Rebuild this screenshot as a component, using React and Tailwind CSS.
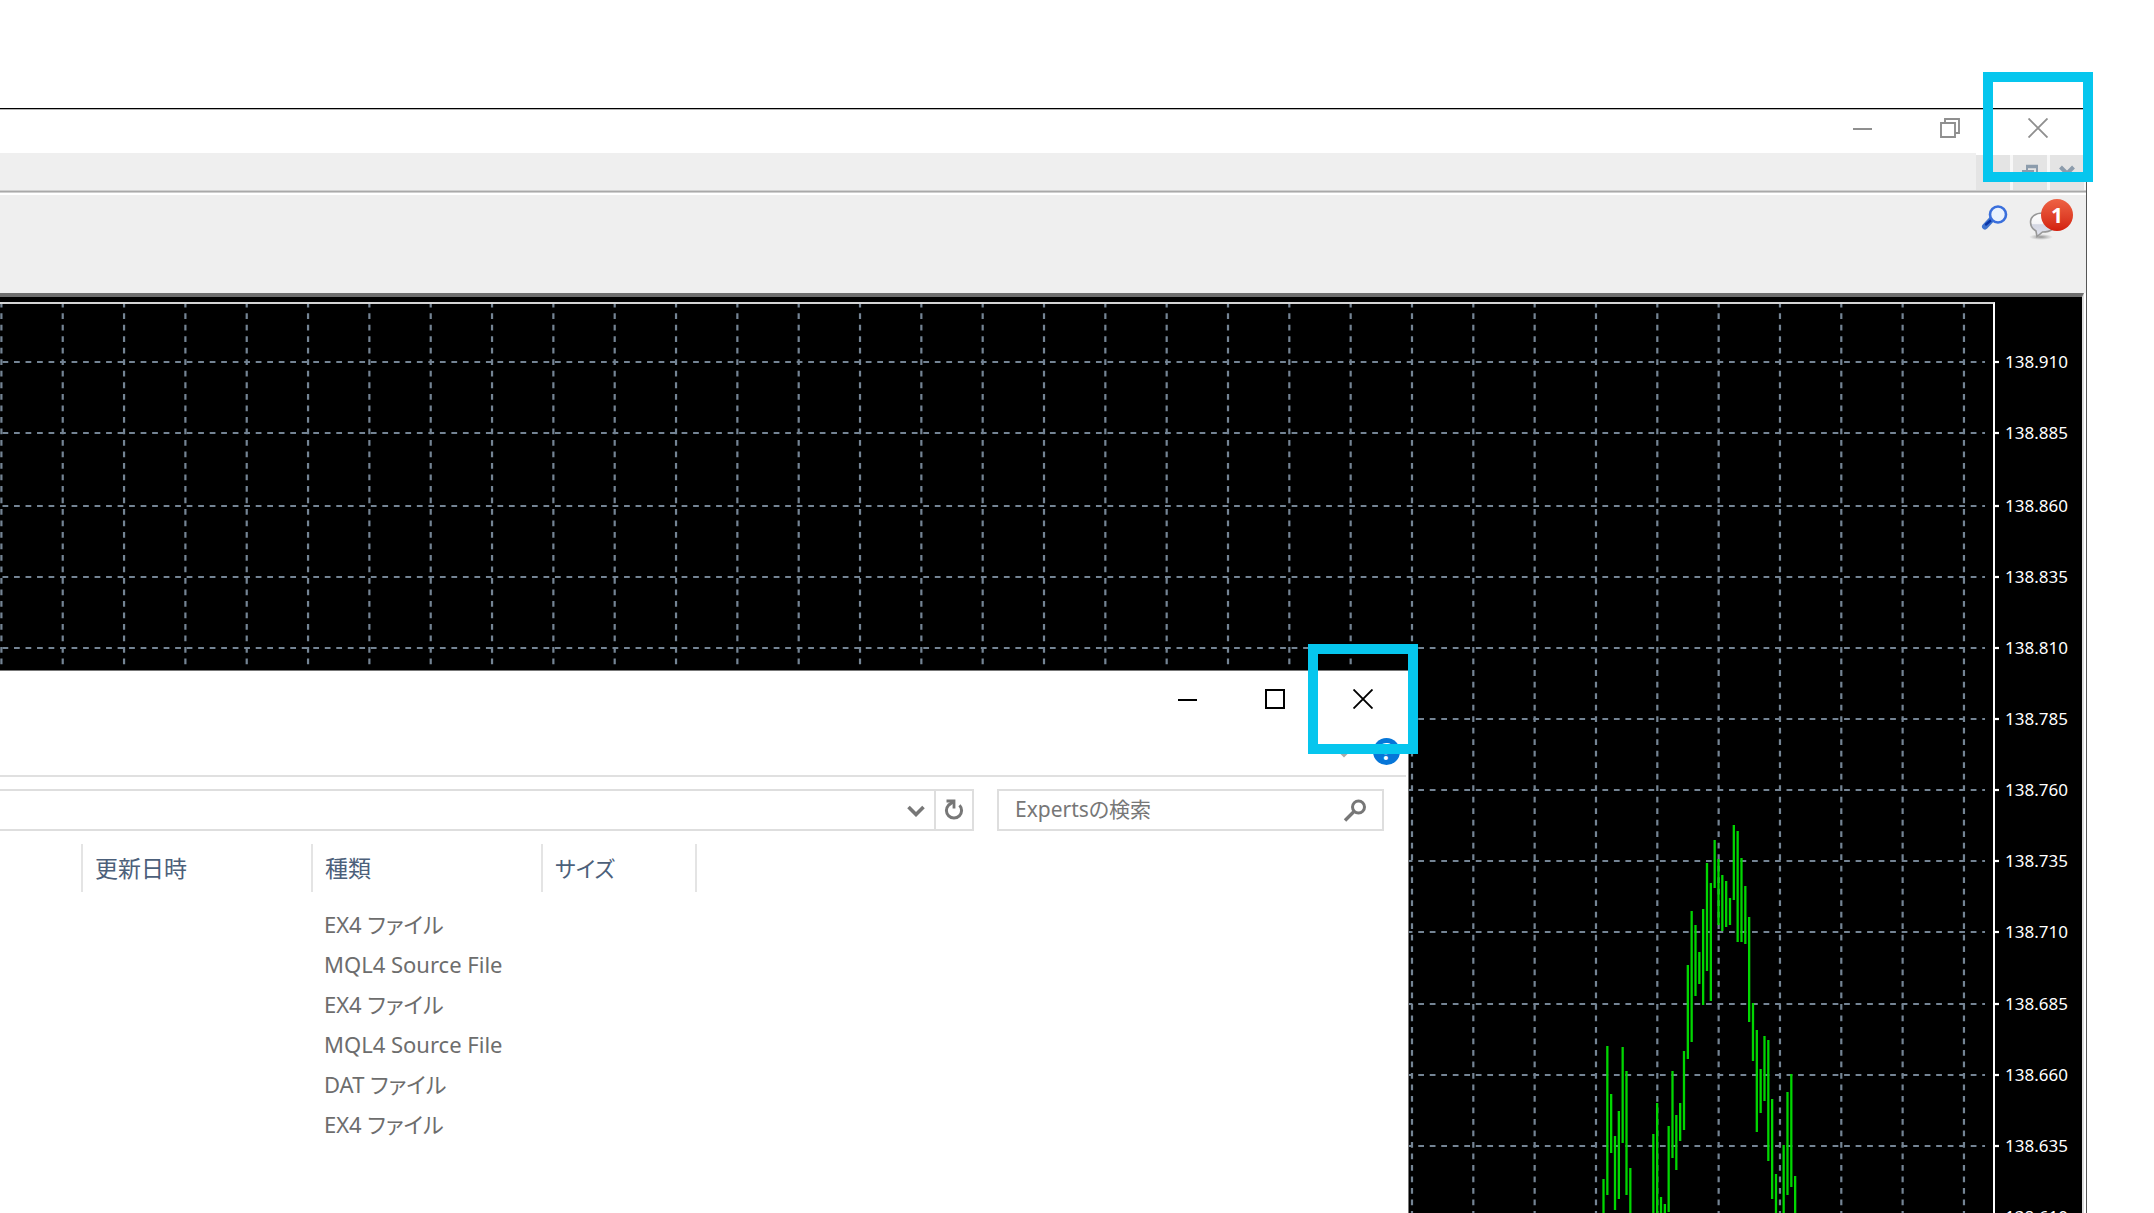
import React from "react";

const GRID_STEP = 61.33;
const GRID_X = Array.from({ length: 46 }, (_, i) => 1.4 + i * GRID_STEP);

const LEVELS = [
  ["138.910", 58],
  ["138.885", 129],
  ["138.860", 202],
  ["138.835", 273],
  ["138.810", 344],
  ["138.785", 415],
  ["138.760", 486],
  ["138.735", 557],
  ["138.710", 628],
  ["138.685", 700],
  ["138.660", 771],
  ["138.635", 842],
  ["138.610", 913],
];

// [slot, high, low]: slots are BAR_STEP apart, high and low are heights inside the plot
const BAR_STEP = 3.833;
const BARS = [
  [0, 875, 960], [1, 742, 891], [2, 790, 849], [3, 832, 906], [4, 807, 895],
  [5, 743, 839], [6, 767, 891], [7, 864, 960], [13, 830, 960], [14, 799, 960],
  [15, 893, 960], [16, 900, 960], [17, 822, 908], [18, 767, 854], [19, 811, 866],
  [20, 799, 837], [21, 747, 826], [22, 661, 755], [23, 607, 738], [24, 621, 692],
  [25, 648, 680], [26, 605, 701], [27, 559, 667], [28, 579, 697], [29, 536, 584],
  [30, 555, 621], [31, 571, 627], [32, 577, 623], [33, 594, 621], [34, 521, 596],
  [35, 527, 638], [36, 554, 638], [37, 582, 640], [38, 613, 718], [39, 699, 757],
  [40, 726, 828], [41, 765, 809], [42, 732, 797], [43, 736, 857], [44, 795, 895],
  [45, 870, 960], [47, 841, 960], [48, 788, 891], [49, 770, 883], [50, 872, 960],
];

const FILES = [
  "EX4 ファイル",
  "MQL4 Source File",
  "EX4 ファイル",
  "MQL4 Source File",
  "DAT ファイル",
  "EX4 ファイル",
];

function MinimizeIcon() {
  return (
    <svg width="20" height="20" viewBox="0 0 20 20" fill="none" stroke="currentColor" strokeWidth="2">
      <path d="M1 11H20" />
    </svg>
  );
}

function MaximizeIcon() {
  return (
    <svg width="20" height="20" viewBox="0 0 20 20" fill="none" stroke="currentColor" strokeWidth="2">
      <path d="M1 1H19V19H1Z" />
    </svg>
  );
}

function RestoreIcon() {
  return (
    <svg width="20" height="20" viewBox="0 0 20 20" fill="none" stroke="currentColor" strokeWidth="1.9">
      <path d="M1 5H15V19H1Z" />
      <path d="M5 5V1H19V15H15" />
    </svg>
  );
}

function CloseIcon() {
  return (
    <svg width="20" height="20" viewBox="0 0 20 20" fill="none" stroke="currentColor" strokeWidth="1.9">
      <path d="M0.5 0.5L19.5 19.5M19.5 0.5L0.5 19.5" />
    </svg>
  );
}

function CaptionButton({ label, children }) {
  return (
    <button type="button" aria-label={label} className="flex h-9 w-[88px] items-center justify-center">
      {children}
    </button>
  );
}

function ChildButton({ label, children }) {
  return (
    <button type="button" aria-label={label} className="flex h-[35px] w-[34px] items-center justify-center bg-[#e4e4e4] text-[#8c9cac]">
      {children}
    </button>
  );
}

function Plot() {
  return (
    <svg className="absolute inset-0 h-full w-full" fill="none" role="img" aria-label="Price chart">
      <g stroke="#748494" strokeWidth="2.2" strokeDasharray="5.755 5.755">
        {GRID_X.map((x) => (
          <line key={x} x1={x} x2={x} y1="-2.2" y2="960" />
        ))}
        {LEVELS.map(([price, y]) => (
          <line key={price} x1="2.5" x2="99.6%" y1={y} y2={y} />
        ))}
      </g>
      <g stroke="#00d600" strokeWidth="2.3">
        {BARS.map(([slot, high, low]) => {
          const x = 1603.5 + slot * BAR_STEP;
          return <line key={slot} x1={x} x2={x} y1={high} y2={low} />;
        })}
      </g>
    </svg>
  );
}

function PriceAxis() {
  return (
    <svg className="absolute inset-0 h-full w-full">
      {LEVELS.map(([price, y]) => (
        <g key={price}>
          <path d={`M0 ${y}h4`} stroke="#fff" strokeWidth="2.2" />
          <text x="10" y={y + 6} fill="#fff" className="text-[17px]">
            {price}
          </text>
        </g>
      ))}
    </svg>
  );
}

function Toolbar() {
  return (
    <div className="flex h-[100px] items-start justify-end border-t-2 border-white bg-[#efefef] pt-2 pr-[13px]">
      <button type="button" aria-label="Search" className="mr-[21px]">
        <svg width="28" height="30" viewBox="0 0 28 30" fill="none" strokeLinecap="round">
          <path d="M5 23.5L11.5 16.500" stroke="#3f74cf" strokeWidth="6" />
          <path d="M6 21.5L13 15.500" stroke="#0a35a8" strokeWidth="2.4" />
          <circle cx="18" cy="11.500" r="8" fill="#eaf2fd" stroke="#3a6fdc" strokeWidth="2.6" />
        </svg>
      </button>
      <button type="button" aria-label="Notifications" className="relative h-11 w-11">
        <svg className="absolute inset-0" width="44" height="44" viewBox="0 0 44 44">
          <defs>
            <linearGradient id="bubble" x1="0" y1="0" x2="0" y2="1">
              <stop offset="0" stopColor="#ffffff" />
              <stop offset="0.45" stopColor="#f4f4f6" />
              <stop offset="0.5" stopColor="#d3d6e2" />
              <stop offset="1" stopColor="#e2e4ee" />
            </linearGradient>
            <radialGradient id="shade">
              <stop offset="0" stopColor="#666" stopOpacity="0.7" />
              <stop offset="1" stopColor="#888" stopOpacity="0" />
            </radialGradient>
          </defs>
          <ellipse cx="12" cy="34" rx="12" ry="3" fill="url(#shade)" />
          <path
            d="M14 10C6 10 1.500 14 1.500 19C1.500 23 3.500 26 7 28L8 33.500L13.500 29C22 29 27 25 27 19C27 14 22 10 14 10Z"
            fill="url(#bubble)"
            stroke="#989898"
            strokeWidth="1.600"
          />
        </svg>
        <span className="absolute -top-1 left-3 flex size-8 items-center justify-center rounded-full bg-linear-to-b from-[#ee6244] to-[#d31d0b] text-[21px] leading-8 font-bold text-white">
          1
        </span>
      </button>
    </div>
  );
}

function ExplorerWindow() {
  return (
    <section className="absolute bottom-0 left-0 flex h-[543px] w-[1409px] flex-col border-t border-r border-[#777] bg-white text-[22px]">
      <header className="flex h-14 justify-end pt-[10px] pr-px text-black">
        <CaptionButton label="Minimize"><MinimizeIcon /></CaptionButton>
        <CaptionButton label="Maximize"><MaximizeIcon /></CaptionButton>
        <CaptionButton label="Close"><CloseIcon /></CaptionButton>
      </header>
      <div className="mr-[2px] flex h-[50px] items-center justify-end gap-5 border-b-2 border-[#e0e0e0] pt-px pr-[6px]">
        <button type="button" aria-label="Expand ribbon">
          <svg width="18" height="16" viewBox="0 0 18 16" fill="none" stroke="#aaa" strokeWidth="3">
            <path d="M4 6.500L9 11.500L14 6.500" />
          </svg>
        </button>
        <button type="button" aria-label="Help" className="size-[27px] rounded-full bg-[#0676d8] text-[23px] leading-[27px] font-bold text-white">
          ?
        </button>
      </div>
      <div className="flex pt-3">
        <div className="flex h-[42px] flex-1 border-2 border-l-0 border-[#dedede]">
          <input aria-label="Address" className="min-w-0 flex-1 outline-none" />
          <button type="button" aria-label="Recent locations" className="flex w-9 items-center justify-center">
            <svg width="18" height="14" viewBox="0 0 18 14" fill="none" stroke="#777" strokeWidth="3.600">
              <path d="M1.500 4L9 11.500L16.500 4" />
            </svg>
          </button>
          <button type="button" aria-label="Refresh" className="flex w-[38px] items-center justify-center border-l-2 border-[#dedede]">
            <svg width="20" height="22" viewBox="0 0 20 22" fill="none" stroke="#777" strokeWidth="3">
              <path d="M15.500 6.200A7.600 7.600 0 1 1 4.500 6.200L9.500 2.500" />
              <path d="M2.500 2H10V9.500" strokeWidth="2.800" />
            </svg>
          </button>
        </div>
        <label className="mr-6 ml-[23px] flex h-[42px] w-[387px] items-center border-2 border-[#dedede] pr-[15px] pl-4">
          <input
            aria-label="Expertsの検索"
            placeholder="Expertsの検索"
            className="min-w-0 flex-1 text-[21px] outline-none placeholder:text-[#777]"
          />
          <svg width="24" height="24" viewBox="0 0 24 24" fill="none" stroke="#777">
            <circle cx="15.500" cy="9" r="6" strokeWidth="3" />
            <path d="M11.500 13L2 22.500" strokeWidth="3.400" />
          </svg>
        </label>
      </div>
      <table className="mt-[13px] w-[696px] table-fixed text-left">
        <colgroup>
          <col className="w-[82px]" />
          <col className="w-[230px]" />
          <col className="w-[230px]" />
          <col className="w-[154px]" />
        </colgroup>
        <thead>
          <tr className="h-12 text-[23px] leading-8 text-[#4c607a]">
            <td />
            <th className="border-l-2 border-[#e4e4e4] p-0 pl-3 font-normal">更新日時</th>
            <th className="border-l-2 border-[#e4e4e4] p-0 pl-3 font-normal">種類</th>
            <th className="border-x-2 border-[#e4e4e4] p-0 pl-3 text-[22px] font-normal">サイズ</th>
          </tr>
        </thead>
        <tbody className="text-[#6d6d6d] before:block before:h-3">
          {FILES.map((type, i) => (
            <tr key={i} className="h-10">
              <td />
              <td />
              <td className="p-0 pl-3 whitespace-nowrap">{type}</td>
              <td />
            </tr>
          ))}
        </tbody>
      </table>
      <div className="absolute -top-[27px] right-[-10px] size-[110px] border-10 border-[#06c6ee]" />
    </section>
  );
}

export default function App() {
  return (
    <main className="relative flex h-screen flex-col overflow-hidden bg-white pt-[108px] font-['Noto_Sans','Noto_Sans_CJK_JP',sans-serif] [font-feature-settings:'palt']">
      <section className="mr-[67px] flex min-h-0 flex-1 flex-col border-t border-r border-t-black border-r-[#555]">
        <header className="flex h-11 justify-end border-t border-[#b5b5b5] pr-1 text-[#8f8f8f]">
          <CaptionButton label="Minimize"><MinimizeIcon /></CaptionButton>
          <CaptionButton label="Restore"><RestoreIcon /></CaptionButton>
          <CaptionButton label="Close"><CloseIcon /></CaptionButton>
        </header>
        <div className="flex h-[37px] bg-[#efefef]">
          <div className="flex-1" />
          <div className="flex gap-[3px] border-t-2 border-white bg-[#f7f7f7] pr-[2px]">
            <ChildButton label="Minimize chart">
              <svg width="16" height="16" viewBox="0 0 16 16" stroke="currentColor" strokeWidth="4">
                <path d="M1 13H14" />
              </svg>
            </ChildButton>
            <ChildButton label="Restore chart">
              <svg width="16" height="17" viewBox="0 0 16 17" fill="none" stroke="currentColor" strokeWidth="2">
                <path d="M1 7H11V16H1Z" />
                <path d="M5 6V2.500H15V11H12" />
                <path d="M4 2.500H16M0 8H12" strokeWidth="3.500" />
              </svg>
            </ChildButton>
            <ChildButton label="Close chart">
              <svg width="16" height="16" viewBox="0 0 16 16" stroke="currentColor" strokeWidth="4">
                <path d="M1.500 2L14.500 15M14.500 2L1.500 15" />
              </svg>
            </ChildButton>
          </div>
        </div>
        <div className="h-[3px] border-y border-[#cfcfcf] bg-[#a9a9a9]" />
        <Toolbar />
        <div className="mr-[2px] flex min-h-0 flex-1 border-t-4 border-r-2 border-t-[#6e6e6e] border-r-[#dcdcdc] bg-black pt-[5px]">
          <div className="relative flex-1 border-t-2 border-r-2 border-t-[#d4d4d4] border-r-white">
            <Plot />
          </div>
          <div className="relative w-[87px]">
            <div className="absolute inset-x-0 top-[2px] bottom-0">
              <PriceAxis />
            </div>
          </div>
        </div>
      </section>
      <ExplorerWindow />
      <div className="absolute top-[72px] right-[61px] size-[110px] border-10 border-[#06c6ee]" />
    </main>
  );
}
